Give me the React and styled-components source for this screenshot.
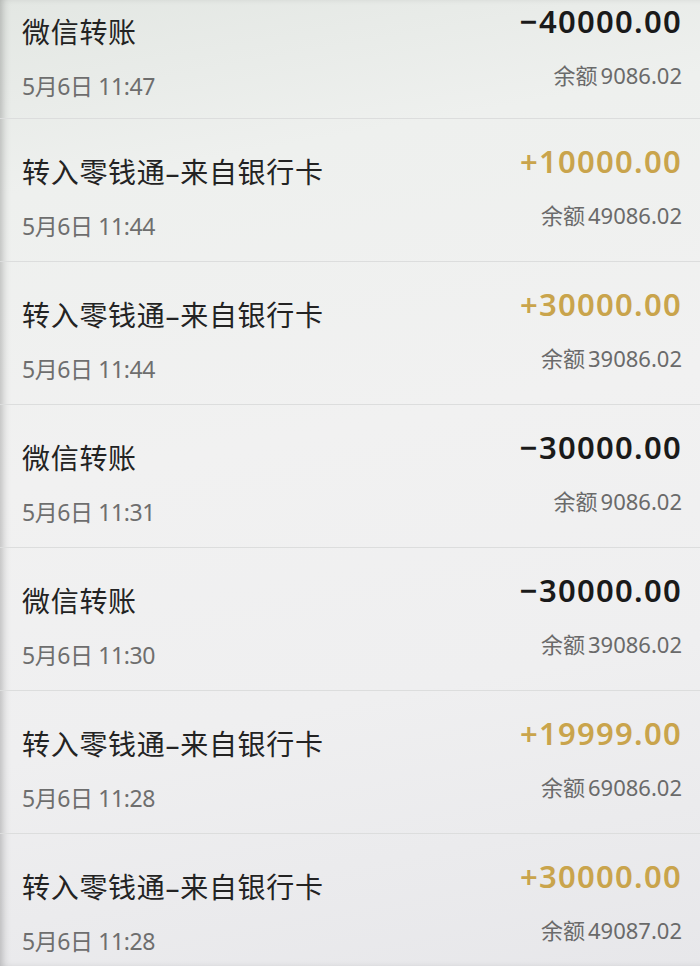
import React from "react";
import styled, { createGlobalStyle } from "styled-components";

const ROWS = [
  { title: "微信转账", time: "5月6日 11:47", amount: "−40000.00", balance: "9086.02", income: false },
  { title: "转入零钱通–来自银行卡", time: "5月6日 11:44", amount: "+10000.00", balance: "49086.02", income: true },
  { title: "转入零钱通–来自银行卡", time: "5月6日 11:44", amount: "+30000.00", balance: "39086.02", income: true },
  { title: "微信转账", time: "5月6日 11:31", amount: "−30000.00", balance: "9086.02", income: false },
  { title: "微信转账", time: "5月6日 11:30", amount: "−30000.00", balance: "39086.02", income: false },
  { title: "转入零钱通–来自银行卡", time: "5月6日 11:28", amount: "+19999.00", balance: "69086.02", income: true },
  { title: "转入零钱通–来自银行卡", time: "5月6日 11:28", amount: "+30000.00", balance: "49087.02", income: true },
];

const GlobalStyle = createGlobalStyle`
  html, body {
    margin: 0;
    padding: 0;
    height: 100%;
    overflow: hidden;
  }
  body {
    font-family: "Noto Sans", "Noto Sans CJK SC", sans-serif;
  }
`;

const App = () => {
  return (
    <>
      <GlobalStyle />
      <Screen>
        <List>
          {ROWS.map((row, i) => (
            <Row key={i} $first={i === 0}>
              <Left>
                <Title>{row.title}</Title>
                <Time>{row.time}</Time>
              </Left>
              <Right>
                <Amount $income={row.income}>{row.amount}</Amount>
                <Balance>
                  余额<BalanceValue>{row.balance}</BalanceValue>
                </Balance>
              </Right>
            </Row>
          ))}
        </List>
      </Screen>
    </>
  );
};

const Screen = styled.div`
  width: 700px;
  height: 966px;
  overflow: hidden;
  background: linear-gradient(
    170deg,
    #e3e7e3 0%,
    #eef0ee 18%,
    #f1f1f1 45%,
    #efeff0 70%,
    #e7e7ea 100%
  );
  box-shadow: inset 6px 0 8px -4px rgba(0, 0, 0, 0.25);
`;

const List = styled.div`
  display: flex;
  flex-direction: column;
`;

const Row = styled.div`
  height: ${(p) => (p.$first ? "118px" : "143px")};
  box-sizing: border-box;
  display: flex;
  justify-content: space-between;
  align-items: flex-start;
  padding: ${(p) => (p.$first ? "3px" : "24px")} 18px 0 22px;
  border-top: ${(p) => (p.$first ? "none" : "1px solid #dcdddd")};
`;

const Left = styled.div`
  display: flex;
  flex-direction: column;
  gap: 21px;
  margin-top: 11px;
`;

const Title = styled.div`
  font-size: 28px;
  line-height: 36px;
  color: #232323;
  letter-spacing: 0.7px;
`;

const Time = styled.div`
  font-size: 23px;
  line-height: 30px;
  color: #6e6e6e;
  letter-spacing: -0.4px;
`;

const Right = styled.div`
  display: flex;
  flex-direction: column;
  align-items: flex-end;
  gap: 21px;
`;

const Amount = styled.div`
  font-family: "Noto Sans", sans-serif;
  font-size: 31px;
  line-height: 36px;
  font-weight: 600;
  letter-spacing: 1.3px;
  color: ${(p) => (p.$income ? "#c9a44c" : "#1a1a1a")};
`;

const Balance = styled.div`
  font-size: 22px;
  line-height: 30px;
  color: #6a6a6a;
`;

const BalanceValue = styled.span`
  margin-left: 3px;
`;

export default App;
